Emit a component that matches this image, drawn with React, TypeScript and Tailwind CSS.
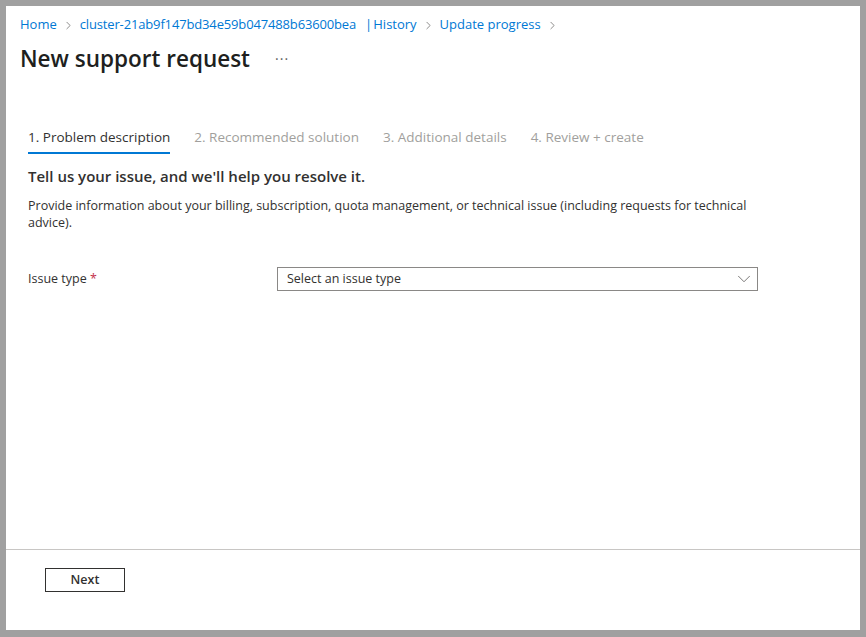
import { ChevronRight, ChevronDown } from "lucide-react";

const font = { fontFamily: '"Segoe UI", "Open Sans", "Noto Sans", sans-serif' };

const tabs = [
  "1. Problem description",
  "2. Recommended solution",
  "3. Additional details",
  "4. Review + create",
];

function Sep() {
  return <ChevronRight className="mx-[5px] h-[13px] w-[13px] text-[#605e5c]" strokeWidth={1.3} />;
}

export default function App() {
  return (
    <div
      className="h-[637px] w-[866px] bg-[#a0a0a0] pt-[6px] pl-[6px] pr-[6px] pb-[7px]"
      style={font}
    >
      <div className="flex h-full flex-col bg-white">
        <div className="flex-1 pl-[14px]">
          {/* breadcrumb */}
          <nav className="mt-[9px] flex h-[20px] items-center text-[13px] text-[#0078d4]">
            <span>Home</span>
            <Sep />
            <span className="tracking-[-0.15px]">cluster-21ab9f147bd34e59b047488b63600bea</span>
            <span className="ml-[9px] mr-[1px]">|</span>
            <span>History</span>
            <Sep />
            <span>Update progress</span>
            <Sep />
          </nav>

          {/* title */}
          <div className="mt-[8px] flex items-center">
            <h1 className="text-[22.5px] font-semibold leading-[32px] text-[#201f1e]">
              New support request
            </h1>
            <span className="ml-[25px] text-[14px] leading-none tracking-[1px] text-[#605e5c]">···</span>
          </div>

          {/* tabs */}
          <div className="ml-[8px] mt-[52px] flex gap-[24px] text-[13.5px]">
            {tabs.map((t, i) => (
              <div key={t} className="flex flex-col">
                <span className={i === 0 ? "leading-[20px] text-[#323130]" : "leading-[20px] text-[#a19f9d]"}>
                  {t}
                </span>
                <span className={i === 0 ? "mt-[5px] h-[2px] bg-[#0078d4]" : "mt-[5px] h-[2px]"} />
              </div>
            ))}
          </div>

          <div className="ml-[8px] mt-[11px] max-w-[740px]">
            <h2 className="text-[15px] font-semibold leading-[22px] text-[#323130]">
              Tell us your issue, and we'll help you resolve it.
            </h2>
            <p className="mt-[10px] text-[12.5px] leading-[17px] text-[#323130]">
              Provide information about your billing, subscription, quota management, or technical issue
              (including requests for technical advice).
            </p>

            <div className="mt-[36px] flex items-center">
              <label className="w-[249px] text-[12.5px] text-[#323130]">
                Issue type <span className="text-[#c4314b]">*</span>
              </label>
              <div className="flex h-[24px] w-[481px] items-center justify-between border border-[#8a8886] pl-[9px] pr-[2px] text-[12.5px] text-[#323130]">
                <span>Select an issue type</span>
                <ChevronDown className="h-[22px] w-[22px] text-[#605e5c]" strokeWidth={0.9} />
              </div>
            </div>
          </div>
        </div>

        {/* footer */}
        <div className="flex h-[81px] items-start border-t border-[#c8c6c4] pl-[39px] pt-[18px]">
          <button className="h-[24px] w-[80px] border border-[#323130] text-[12.5px] font-semibold text-[#323130]">
            Next
          </button>
        </div>
      </div>
    </div>
  );
}
